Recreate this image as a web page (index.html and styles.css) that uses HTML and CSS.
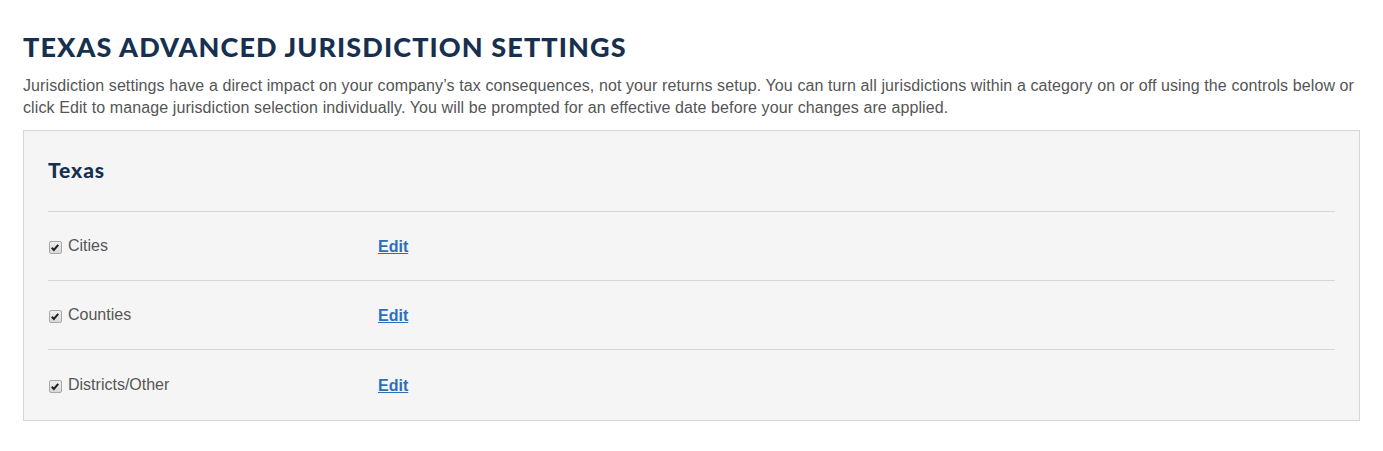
FILE: index.html
```html
<!DOCTYPE html>
<html lang="en">
<head>
<meta charset="utf-8">
<title>Texas Advanced Jurisdiction Settings</title>
<link rel="stylesheet" href="styles.css">
</head>
<body>
<div class="page">
  <h1 class="title">TEXAS ADVANCED JURISDICTION SETTINGS</h1>
  <p class="intro">Jurisdiction settings have a direct impact on your company’s tax consequences, not your returns setup. You can turn all jurisdictions within a category on or off using the controls below or click Edit to manage jurisdiction selection individually. You will be prompted for an effective date before your changes are applied.</p>
  <section class="panel">
    <h2 class="panel-title">Texas</h2>
    <div class="row">
      <label class="check"><span class="box"><svg viewBox="0 0 13 13" width="13" height="13"><path d="M3 6.8 L5.3 9.2 L10 3.6" fill="none" stroke="#222" stroke-width="2.2"/></svg></span><span class="label">Cities</span></label>
      <a class="edit" href="#">Edit</a>
    </div>
    <div class="row">
      <label class="check"><span class="box"><svg viewBox="0 0 13 13" width="13" height="13"><path d="M3 6.8 L5.3 9.2 L10 3.6" fill="none" stroke="#222" stroke-width="2.2"/></svg></span><span class="label">Counties</span></label>
      <a class="edit" href="#">Edit</a>
    </div>
    <div class="row">
      <label class="check"><span class="box"><svg viewBox="0 0 13 13" width="13" height="13"><path d="M3 6.8 L5.3 9.2 L10 3.6" fill="none" stroke="#222" stroke-width="2.2"/></svg></span><span class="label">Districts/Other</span></label>
      <a class="edit" href="#">Edit</a>
    </div>
  </section>
</div>
</body>
</html>
```

FILE: styles.css
```css
html, body {
  margin: 0;
  padding: 0;
  background: #ffffff;
}
.page {
  padding: 30px 23px 0 23px;
}
.title {
  margin: 0;
  font-family: Lato, "Open Sans", sans-serif;
  font-weight: 900;
  font-size: 27px;
  line-height: 34px;
  letter-spacing: 1.1px;
  color: #17304f;
}
.intro {
  margin: 11px 0 0 0;
  font-family: "Liberation Sans", Arial, sans-serif;
  font-size: 16px;
  line-height: 22px;
  letter-spacing: 0.1px;
  color: #555555;
}
.panel {
  margin-top: 11px;
  background: #f5f5f5;
  border: 1px solid #d6d6d6;
  padding: 0 24px;
  box-sizing: border-box;
  width: 1337px;
}
.panel-title {
  margin: 0;
  padding: 27px 0 0 0;
  height: 81px;
  box-sizing: border-box;
  font-family: Lato, "Open Sans", sans-serif;
  font-weight: 900;
  font-size: 21px;
  line-height: 24px;
  letter-spacing: 0.9px;
  color: #17304f;
  border-bottom: 1px solid #d6d6d6;
}
.row {
  display: flex;
  align-items: center;
  height: 69px;
  border-bottom: 1px solid #d6d6d6;
  box-sizing: border-box;
  font-family: "Liberation Sans", Arial, sans-serif;
  font-size: 16px;
}
.row:last-child {
  border-bottom: none;
  height: 70px;
}
.check {
  display: flex;
  align-items: center;
  width: 330px;
}
.box {
  display: inline-flex;
  width: 13px;
  height: 13px;
  margin: 3px 6px 0 1px;
  box-sizing: border-box;
  border: 1px solid #a8a8a8;
  border-radius: 2px;
  background: linear-gradient(#efefef, #d8d8d8);
  overflow: hidden;
}
.box svg {
  margin: -1px 0 0 -1px;
}
.label {
  color: #555555;
  margin-top: -1px;
}
.edit {
  color: #2c6fb8;
  font-weight: 700;
  text-decoration: underline;
  margin-top: 1px;
}
```
